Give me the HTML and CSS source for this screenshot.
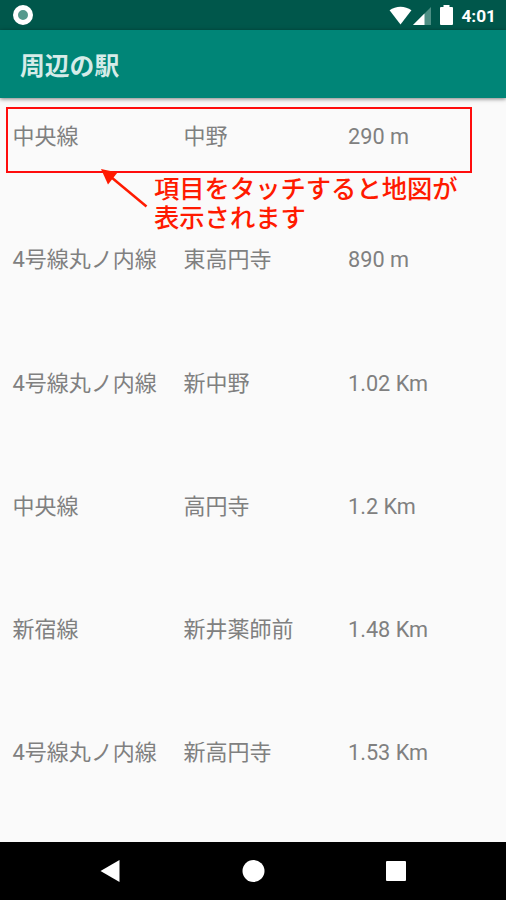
FILE: index.html
```
<!DOCTYPE html>
<html lang="ja">
<head>
    <meta charset="UTF-8">
    <meta name="viewport" content="width=device-width, initial-scale=1.0">
    <title>周辺の駅</title>
    <link rel="stylesheet" href="styles.css">
</head>
<body>
    <div class="phone">
        <!-- Status bar -->
        <div class="status-bar">
            <span class="notification"></span>
            <div class="status-icons">
                <svg class="wifi" width="23" height="19" viewBox="0 0 24 20">
                    <path d="M0.5 4.5C7 -0.6 17 -0.6 23.5 4.5L12 19.5Z" fill="#fff"/>
                </svg>
                <svg class="signal" width="18" height="18" viewBox="0 0 18 18">
                    <path d="M0 18L18 0V18Z" fill="#4d8f84"/>
                    <path d="M0 18L11.5 6.5V18Z" fill="#fff"/>
                </svg>
                <svg class="battery" width="13" height="20" viewBox="0 0 13 20">
                    <path d="M3.5 0H9.5V2H12Q13 2 13 3V19Q13 20 12 20H1Q0 20 0 19V3Q0 2 1 2H3.5Z" fill="#fff"/>
                </svg>
                <span class="clock">4:01</span>
            </div>
        </div>

        <!-- App bar -->
        <header class="app-bar">
            <h1 class="title">周辺の駅</h1>
        </header>

        <!-- Station list -->
        <main class="station-list">
            <div class="station">
                <span>中央線</span>
                <span>中野</span>
                <span class="distance">290 m</span>
            </div>
            <div class="station">
                <span>4号線丸ノ内線</span>
                <span>東高円寺</span>
                <span class="distance">890 m</span>
            </div>
            <div class="station">
                <span>4号線丸ノ内線</span>
                <span>新中野</span>
                <span class="distance">1.02 Km</span>
            </div>
            <div class="station">
                <span>中央線</span>
                <span>高円寺</span>
                <span class="distance">1.2 Km</span>
            </div>
            <div class="station">
                <span>新宿線</span>
                <span>新井薬師前</span>
                <span class="distance">1.48 Km</span>
            </div>
            <div class="station">
                <span>4号線丸ノ内線</span>
                <span>新高円寺</span>
                <span class="distance">1.53 Km</span>
            </div>

            <!-- Help shown over the list -->
            <div class="highlight"></div>
            <svg class="arrow" width="50" height="42" viewBox="0 0 50 42">
                <path d="M10 8L45.5 37.5" stroke="#ff1a00" stroke-width="2.5" fill="none"/>
                <path d="M0 0L16.5 3.5L7 15.5Z" fill="#ff1a00"/>
            </svg>
            <p class="hint">項目をタッチすると地図が<br>表示されます</p>
        </main>

        <!-- Navigation bar -->
        <nav class="nav-bar">
            <svg width="24" height="24" viewBox="0 0 24 24">
                <path d="M2.5 12L21.5 1V23Z" fill="#fff"/>
            </svg>
            <svg width="24" height="24" viewBox="0 0 24 24">
                <circle cx="12.5" cy="12" r="11" fill="#fff"/>
            </svg>
            <svg width="24" height="24" viewBox="0 0 24 24">
                <rect x="2" y="2" width="20" height="20" rx="1" fill="#fff"/>
            </svg>
        </nav>
    </div>
</body>
</html>
```

FILE: styles.css
```
/* Basic reset */
* {
    margin: 0;
    padding: 0;
    box-sizing: border-box;
}

body {
    font-family: Roboto, "Noto Sans CJK JP", sans-serif;
    background-color: #fafafa;
    color: #808080;
}

.phone {
    display: flex;
    flex-direction: column;
    width: 506px;
    height: 900px;
    overflow: hidden;
}

/* Status bar */
.status-bar {
    display: flex;
    justify-content: space-between;
    align-items: center;
    height: 30px;
    padding: 0 10px 0 13px;
    background-color: #00574b;
}

.notification {
    width: 20px;
    height: 20px;
    border: 5px solid #fff;
    border-radius: 50%;
    background-color: #55998c;
}

.status-icons {
    display: flex;
    align-items: center;
}

.signal {
    margin-left: 1px;
    margin-top: 2px;
}

.battery {
    margin-left: 9px;
}

.clock {
    margin-left: 8px;
    padding-top: 1px;
    font-size: 17.3px;
    font-weight: 700;
    line-height: 30px;
    color: #fff;
}

/* App bar */
.app-bar {
    display: flex;
    align-items: center;
    height: 68px;
    padding: 5px 0 0 20px;
    background-color: #008577;
    box-shadow: 0 1px 4px rgba(0, 0, 0, 0.5);
    z-index: 1;
}

.title {
    font-size: 24.8px;
    font-weight: 700;
    line-height: 36px;
    color: #d6ebe8;
}

/* Station list */
.station-list {
    position: relative;
    flex: 1;
    background-color: #fafafa;
}

.station {
    display: grid;
    grid-template-columns: 171px 164.5px 1fr;
    height: 123.3px;
    padding: 23px 0 0 12.5px;
    font-size: 22px;
    line-height: 32px;
    white-space: nowrap;
}

.distance {
    font-size: 21.7px;
}

/* Help overlay */
.highlight {
    position: absolute;
    left: 6px;
    top: 9px;
    width: 466px;
    height: 66px;
    border: 2px solid #ff0d0d;
}

.arrow {
    position: absolute;
    left: 101px;
    top: 71px;
}

.hint {
    position: absolute;
    left: 154px;
    top: 77px;
    font-size: 25.3px;
    font-weight: 500;
    line-height: 29px;
    white-space: nowrap;
    color: #ff1a00;
}

/* Navigation bar */
.nav-bar {
    display: flex;
    justify-content: center;
    align-items: center;
    gap: 119px;
    height: 58px;
    background-color: #000;
}
```
